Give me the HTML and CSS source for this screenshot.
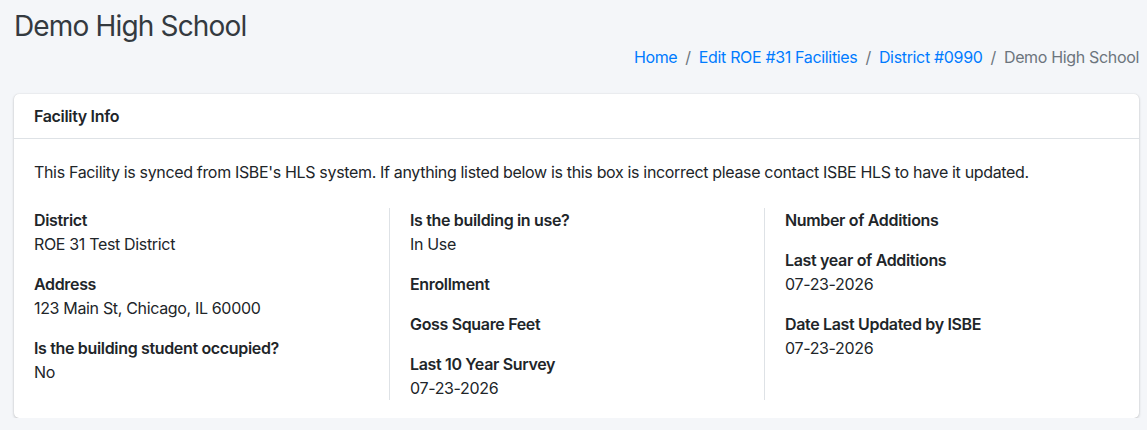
FILE: index.html
```html
<!DOCTYPE html>
<html lang="en">

<head>
    <meta charset="UTF-8">
    <meta name="viewport" content="width=device-width, initial-scale=1.0">
    <title>Demo High School</title>
    <link rel="stylesheet" href="styles.css">
</head>

<body>
    <div class="content-wrapper">
        <section class="content-header">
            <h1>Demo High School</h1>
            <ol class="breadcrumb">
                <li><a href="#">Home</a></li>
                <li><a href="#">Edit ROE #31 Facilities</a></li>
                <li><a href="#">District #0990</a></li>
                <li class="active">Demo High School</li>
            </ol>
        </section>

        <div class="card">
            <div class="card-header">Facility Info</div>
            <div class="card-body">
                <p class="sync-note">This Facility is synced from ISBE's HLS system. If anything listed below is this box is incorrect please contact ISBE HLS to have it updated.</p>
                <div class="info-grid">
                    <dl class="info-col">
                        <div class="info-item">
                            <dt>District</dt>
                            <dd>ROE 31 Test District</dd>
                        </div>
                        <div class="info-item">
                            <dt>Address</dt>
                            <dd>123 Main St, Chicago, IL 60000</dd>
                        </div>
                        <div class="info-item">
                            <dt>Is the building student occupied?</dt>
                            <dd>No</dd>
                        </div>
                    </dl>
                    <dl class="info-col">
                        <div class="info-item">
                            <dt>Is the building in use?</dt>
                            <dd>In Use</dd>
                        </div>
                        <div class="info-item">
                            <dt>Enrollment</dt>
                            <dd></dd>
                        </div>
                        <div class="info-item">
                            <dt>Goss Square Feet</dt>
                            <dd></dd>
                        </div>
                        <div class="info-item">
                            <dt>Last 10 Year Survey</dt>
                            <dd>07-23-2026</dd>
                        </div>
                    </dl>
                    <dl class="info-col">
                        <div class="info-item">
                            <dt>Number of Additions</dt>
                            <dd></dd>
                        </div>
                        <div class="info-item">
                            <dt>Last year of Additions</dt>
                            <dd>07-23-2026</dd>
                        </div>
                        <div class="info-item">
                            <dt>Date Last Updated by ISBE</dt>
                            <dd>07-23-2026</dd>
                        </div>
                    </dl>
                </div>
            </div>
        </div>
    </div>
</body>

</html>
```

FILE: styles.css
```css
/* Page colours */
:root {
    --page-bg: #f4f6f9;
    --text: #212529;
    --title: #343a40;
    --muted: #6c757d;
    --link: #007bff;
    --line: #dee2e6;
}

body {
    margin: 0;
    background-color: var(--page-bg);
    color: var(--text);
    font-family: 'Inter', 'Noto Sans', sans-serif;
    font-size: 16px;
    line-height: 24px;
    letter-spacing: -0.021em;
}

.content-wrapper {
    padding: 0 8px 0 14px;
}

.content-header h1 {
    margin: 0;
    padding-top: 8px;
    font-size: 28px;
    line-height: 36px;
    font-weight: 400;
    letter-spacing: -0.03em;
    color: var(--title);
}

.breadcrumb {
    display: flex;
    justify-content: flex-end;
    list-style: none;
    margin: 0;
    padding: 1px 0 0;
}

.breadcrumb li + li::before {
    content: "/";
    color: var(--muted);
    padding: 0 8px;
}

.breadcrumb a {
    color: var(--link);
    text-decoration: none;
}

.breadcrumb .active {
    color: var(--muted);
}

.card {
    margin-top: 25px;
    background-color: #fff;
    border-radius: 5px;
    box-shadow: 0 0 1px rgba(0, 0, 0, 0.125), 0 1px 3px rgba(0, 0, 0, 0.2);
}

.card-header {
    padding: 10px 20px;
    font-weight: 600;
    border-bottom: 1px solid var(--line);
}

.card-body {
    padding: 21px 0 18px;
}

.sync-note {
    margin: 0 20px 24px;
}

.info-grid {
    display: grid;
    grid-template-columns: repeat(3, 1fr);
}

.info-col {
    margin: 0;
    padding: 0 20px;
}

.info-col + .info-col {
    border-left: 1px solid var(--line);
}

.info-item + .info-item {
    margin-top: 16px;
}

.info-item dt {
    font-weight: 600;
}

.info-item dd {
    margin: 0;
}
```
